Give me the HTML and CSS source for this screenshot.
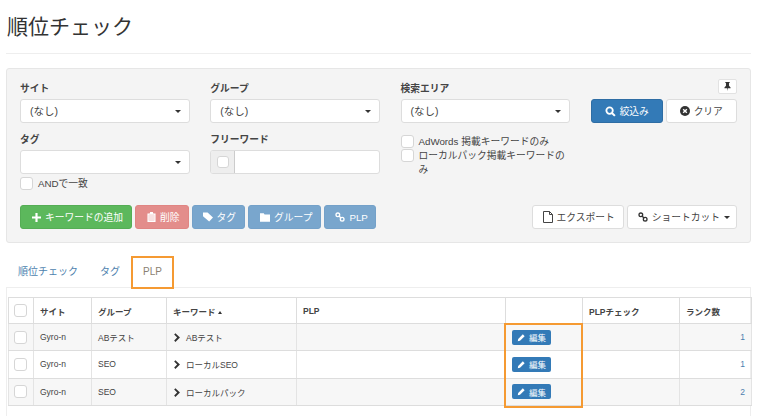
FILE: index.html
```html
<!DOCTYPE html>
<html lang="ja">
<head>
<meta charset="utf-8">
<title>順位チェック</title>
<link rel="stylesheet" href="styles.css">
</head>
<body>
<svg class="defs" width="0" height="0">
  <symbol id="i-pencil" viewBox="0 0 12 12"><path d="M1 11l.6-3L7.8 1.8l2.4 2.4L4 10.4z"/></symbol>
  <symbol id="i-link" viewBox="0 0 12 12"><g fill="none" stroke="currentColor" stroke-width="1.6"><circle cx="3.4" cy="3.4" r="2.2"/><circle cx="8.6" cy="8.6" r="2.2"/><path d="M4.6 4.6l2.8 2.8"/></g></symbol>
  <symbol id="i-chev" viewBox="0 0 8 10"><path d="M1.6 0L6.8 5 1.6 10 .2 8.4 3.6 5 .2 1.6z"/></symbol>
</svg>
<h1 class="title">順位チェック</h1>
<div class="rule"></div>
<section class="panel">
  <div class="filters">
    <div class="field">
      <label class="lbl">サイト</label>
      <div class="select">(なし)<span class="caret"></span></div>
    </div>
    <div class="field">
      <label class="lbl">グループ</label>
      <div class="select">(なし)<span class="caret"></span></div>
    </div>
    <div class="field">
      <label class="lbl">検索エリア</label>
      <div class="select">(なし)<span class="caret"></span></div>
    </div>
    <div class="actions">
      <button class="pin"><svg width="9" height="9" viewBox="0 0 10 10"><path d="M2.6 0h4.8v1H6.7v3.2L8.4 6v1H5.4L5 10 4.6 7H1.6V6l1.7-1.8V1H2.6z" fill="#333"/></svg></button>
      <div class="action-row">
        <button class="btn primary"><svg width="11" height="11" viewBox="0 0 12 12"><circle cx="5" cy="5" r="3.5" fill="none" stroke="#fff" stroke-width="2"/><path d="M7.6 7.6l3.2 3.2" stroke="#fff" stroke-width="2.2"/></svg>絞込み</button>
        <button class="btn plain"><svg width="10" height="10" viewBox="0 0 12 12"><circle cx="6" cy="6" r="6" fill="#333"/><path d="M3.8 3.8l4.4 4.4M8.2 3.8L3.8 8.2" stroke="#fff" stroke-width="1.7"/></svg>クリア</button>
      </div>
    </div>
    <div class="field">
      <label class="lbl">タグ</label>
      <div class="select"><span class="caret"></span></div>
      <label class="check and"><span class="box"></span>ANDで一致</label>
    </div>
    <div class="field">
      <label class="lbl">フリーワード</label>
      <div class="group"><span class="addon"><span class="box small"></span></span><span class="ginput"></span></div>
    </div>
    <div class="field checks">
      <label class="check"><span class="box"></span>AdWords 掲載キーワードのみ</label>
      <label class="check"><span class="box"></span><span>ローカルパック掲載キーワードのみ</span></label>
    </div>
  </div>
  <div class="toolbar">
    <div class="btns">
      <button class="btn success wide"><svg width="9" height="9" viewBox="0 0 10 10"><path d="M3.8 0h2.4v3.8H10v2.4H6.2V10H3.8V6.2H0V3.8h3.8z" fill="#fff"/></svg>キーワードの追加</button>
      <button class="btn danger wide"><svg width="9" height="10" viewBox="0 0 10 11"><path d="M3.5 0h3l.5 1.5h2.5V11H.5V1.5H3zM2 3v6.5h6V3z" fill="#fff"/><path d="M2 3h6v6.5H2z" fill="#fff" opacity=".75"/></svg>削除</button>
      <button class="btn info"><svg width="10" height="10" viewBox="0 0 12 11"><path d="M0 0h5.5L12 6.2 7.4 11 0 4.5z" fill="#fff"/></svg>タグ</button>
      <button class="btn info wide"><svg width="10" height="9" viewBox="0 0 12 10"><path d="M0 0h4.5l1 1.5H12V10H0z" fill="#fff"/></svg>グループ</button>
      <button class="btn info narrow"><svg class="ico-w" width="10" height="10"><use href="#i-link"/></svg>PLP</button>
    </div>
    <div class="btns">
      <button class="btn plain"><svg width="10" height="12" viewBox="0 0 10 12"><path d="M.5.5h6l3 3v8h-9zM6.5.5v3h3" fill="#fff" stroke="#444"/></svg>エクスポート</button>
      <button class="btn plain tight"><svg class="ico-d" width="10" height="10"><use href="#i-link"/></svg>ショートカット<span class="caret small"></span></button>
    </div>
  </div>
</section>
<nav class="tabs">
  <a class="tab">順位チェック</a>
  <a class="tab">タグ</a>
  <a class="tab active">PLP</a>
</nav>
<section class="tabbody">
  <div class="tablewrap">
    <table class="grid">
      <colgroup>
        <col class="c1"><col class="c2"><col class="c3"><col class="c4"><col class="c5"><col class="c6"><col class="c7"><col class="c8">
      </colgroup>
      <thead>
        <tr><th><span class="box"></span></th><th>サイト</th><th>グループ</th><th>キーワード <span class="sort"></span></th><th>PLP</th><th></th><th>PLPチェック</th><th>ランク数</th></tr>
      </thead>
      <tbody>
        <tr><td><span class="box"></span></td><td>Gyro-n</td><td>ABテスト</td><td><svg class="chev" width="7" height="9"><use href="#i-chev"/></svg>ABテスト</td><td></td><td><a class="edit"><svg class="ico-w" width="9" height="9"><use href="#i-pencil"/></svg>編集</a></td><td></td><td class="num">1</td></tr>
        <tr><td><span class="box"></span></td><td>Gyro-n</td><td>SEO</td><td><svg class="chev" width="7" height="9"><use href="#i-chev"/></svg>ローカルSEO</td><td></td><td><a class="edit"><svg class="ico-w" width="9" height="9"><use href="#i-pencil"/></svg>編集</a></td><td></td><td class="num">1</td></tr>
        <tr><td><span class="box"></span></td><td>Gyro-n</td><td>SEO</td><td><svg class="chev" width="7" height="9"><use href="#i-chev"/></svg>ローカルパック</td><td></td><td><a class="edit"><svg class="ico-w" width="9" height="9"><use href="#i-pencil"/></svg>編集</a></td><td></td><td class="num">2</td></tr>
      </tbody>
    </table>
    <div class="mark"></div>
  </div>
</section>
</body>
</html>
```
FILE: styles.css
```css
* { box-sizing: border-box; }
html, body { margin: 0; height: 416px; overflow: hidden; }
body {
  background: #fff;
  color: #444;
  font-family: "Liberation Sans", "Noto Sans CJK JP", sans-serif;
  font-size: 10px;
  padding: 0 9px 0 6px;
}
.defs { position: absolute; }
.title {
  margin: 0;
  padding: 13px 0 0 1px;
  height: 53px;
  font-size: 21px;
  line-height: 28px;
  font-weight: 400;
  color: #333;
}
.rule { border-top: 1px solid #eee; margin-bottom: 14px; }
.panel {
  height: 175px;
  background: #f4f4f4;
  border: 1px solid #e6e6e6;
  border-radius: 3px;
  padding: 13px 13px 0;
}
.filters {
  display: grid;
  grid-template-columns: 169.5px 169.5px 169.5px 1fr;
  column-gap: 20.75px;
  grid-template-rows: 41px 80px;
  row-gap: 10px;
  height: 123px;
}
.field { display: flex; flex-direction: column; min-width: 0; }
.lbl {
  font-size: 9.75px;
  font-weight: 700;
  color: #444;
  height: 17px;
  line-height: 13px;
}
.select {
  position: relative;
  height: 24px;
  line-height: 22px;
  padding-left: 9px;
  background: #fff;
  border: 1px solid #ddd;
  border-radius: 3px;
  font-size: 10.5px;
  color: #444;
}
.caret {
  position: absolute;
  right: 8px;
  top: 10px;
  border-top: 3px solid #333;
  border-left: 3px solid transparent;
  border-right: 3px solid transparent;
}
.caret.small { position: static; display: inline-block; }
.box {
  flex: none;
  display: inline-block;
  width: 13px;
  height: 13px;
  background: #fff;
  border: 1px solid #d6d6d6;
  border-radius: 3px;
}
.box.small { width: 12px; height: 12px; }
.check { display: flex; gap: 5px; font-size: 9.75px; line-height: 14px; color: #444; }
.check.and { margin-top: 3px; line-height: 13px; }
.group {
  display: flex;
  height: 24px;
  border: 1px solid #ddd;
  border-radius: 3px;
  overflow: hidden;
  background: #fff;
}
.addon {
  width: 24px;
  display: flex;
  align-items: center;
  justify-content: center;
  background: #eee;
  border-right: 1px solid #ccc;
}
.ginput { flex: 1; }
.checks { padding-top: 2px; }
.actions {
  grid-row: 1 / span 2;
  grid-column: 4;
  display: flex;
  flex-direction: column;
  align-items: flex-end;
  margin-top: -3px;
}
.pin {
  width: 19px;
  height: 15px;
  padding: 0;
  background: #fff;
  border: 1px solid #e2e2e2;
  border-radius: 2px;
  display: flex;
  align-items: center;
  justify-content: center;
}
.action-row { display: flex; gap: 3px; margin-top: 5px; }
.action-row .btn { width: 71.5px; height: 24px; justify-content: center; padding: 0; }
.btn {
  display: inline-flex;
  align-items: center;
  gap: 4px;
  height: 24px;
  padding: 0 8px 0 10px;
  font: inherit;
  font-size: 9.75px;
  border: 1px solid transparent;
  border-radius: 3px;
  white-space: nowrap;
}
.btn.wide { padding-left: 11px; }
.btn.narrow { padding-right: 7px; }
.btn.tight { padding-right: 6px; }
.primary { background: #337ab7; border-color: #2e6da4; color: #fff; }
.plain { background: #fff; border-color: #ddd; color: #444; }
.success { background: #5cb85c; border-color: #55ad55; color: #fff; }
.danger { background: #e38d8b; border-color: #e08583; color: #fff; }
.info { background: #79a6cd; border-color: #74a1c9; color: #fff; }
.toolbar { display: flex; justify-content: space-between; }
.btns { display: flex; gap: 3px; }
.ico-w { color: #fff; fill: #fff; }
.ico-d { color: #333; fill: #333; }
.tabs {
  display: flex;
  height: 45px;
  padding: 13px 0 0 1px;
  position: relative;
  font-size: 10px;
}
.tab {
  display: block;
  padding: 9px 11px 0;
  color: #4d7fae;
  height: 33px;
  line-height: 14px;
}
.tab.active {
  color: #8a7f72;
  width: 43px;
  padding: 7px 0 0 10px;
  border: 2px solid #f59a32;
  background: #fff;
  position: relative;
  z-index: 1;
}
.tabbody {
  border: 1px solid #eee;
  border-bottom: 0;
  padding: 9px 0 0 1px;
  height: 129px;
  margin-top: -1px;
}
.tablewrap { position: relative; }
.grid {
  width: 743px;
  border-collapse: collapse;
  table-layout: fixed;
  font-size: 8.5px;
  color: #444;
}
.c1 { width: 25px; }
.c2 { width: 58px; }
.c3 { width: 75px; }
.c4 { width: 130px; }
.c5 { width: 209px; }
.c6 { width: 77px; }
.c7 { width: 97px; }
.c8 { width: 72px; }
.grid th, .grid td {
  border: 1px solid #ddd;
  padding: 0 6px;
  text-align: left;
  vertical-align: middle;
}
.grid th { height: 26px; font-weight: 700; color: #444; }
.grid td { height: 27.3px; border-left-color: #e4e4e4; border-right-color: #e4e4e4; }
.grid tbody tr:nth-child(odd) td { background: #f7f7f7; }
.grid th:first-child, .grid td:first-child { padding: 0 0 0 5px; }
.grid .box { display: block; }
.sort {
  display: inline-block;
  vertical-align: middle;
  border-bottom: 3px solid #333;
  border-left: 2.5px solid transparent;
  border-right: 2.5px solid transparent;
}
.chev { fill: #333; margin: 0 5px 0 1px; vertical-align: -1px; }
.num { text-align: right !important; color: #4d7fae; }
.edit {
  display: inline-flex;
  align-items: center;
  gap: 3px;
  height: 15px;
  width: 39px;
  padding-left: 5px;
  background: #337ab7;
  color: #fff;
  border-radius: 2px;
  font-size: 8.5px;
  vertical-align: middle;
}
.mark {
  position: absolute;
  left: 496px;
  top: 26px;
  width: 79px;
  height: 85px;
  border: 2px solid #f59a32;
  pointer-events: none;
}
```
